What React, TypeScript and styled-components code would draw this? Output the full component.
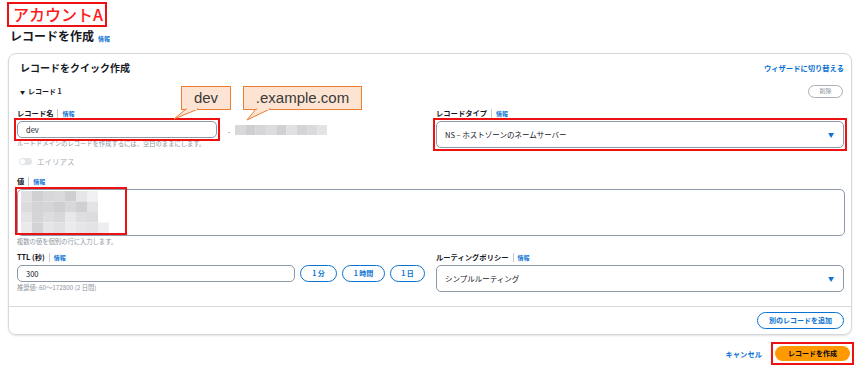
import React from "react";
import styled, { createGlobalStyle, css } from "styled-components";

const GlobalStyle = createGlobalStyle`
  body {
    margin: 0;
    background: #ffffff;
    font-family: "Noto Sans CJK JP", "Noto Sans", sans-serif;
    color: #16191f;
  }
`;

const blue = "#0972d3";
const highlight = "#ee1111";

// square red annotation frame drawn over a control
const markFrame = (inset: number, width: number) => css`
  position: relative;
  &::before {
    content: "";
    position: absolute;
    inset: -${inset}px;
    border: ${width}px solid ${highlight};
    pointer-events: none;
  }
`;

const Page = styled.div`
  position: relative;
  width: 860px;
  height: 370px;
  box-sizing: border-box;
  padding: 2px 8px 0 7px;
  overflow: hidden;
`;

const AccountBadge = styled.div`
  width: 100px;
  height: 25px;
  box-sizing: border-box;
  border: 2px solid ${highlight};
  color: #ff1a1a;
  font-size: 16px;
  font-weight: 500;
  line-height: 21px;
  padding-left: 4px;
  white-space: nowrap;
  overflow: hidden;
`;

const PageTitle = styled.div`
  display: flex;
  align-items: baseline;
  gap: 4px;
  margin: 1px 0 9px 3px;
  height: 16px;
`;

const TitleText = styled.h1`
  margin: 0;
  font-size: 12px;
  line-height: 16px;
  font-weight: 700;
`;

const InfoLink = styled.span`
  color: ${blue};
  font-size: 6px;
  font-weight: 700;
`;

const Card = styled.section`
  margin-left: 1px;
  border: 1px solid #d5d9de;
  border-radius: 8px;
  box-shadow: 0 1px 2px rgba(0, 7, 22, 0.12);
`;

const CardBody = styled.div`
  padding: 7px 7px 14px 8px;
`;

const CardHeader = styled.div`
  display: flex;
  align-items: center;
  justify-content: space-between;
  height: 14px;
`;

const CardTitle = styled.h2`
  margin: 0 0 0 3px;
  font-size: 10px;
  font-weight: 700;
  line-height: 14px;
`;

const TextLink = styled.span`
  color: ${blue};
  font-size: 7.3px;
  font-weight: 700;
`;

const RecordRow = styled.div`
  display: flex;
  align-items: center;
  justify-content: space-between;
  margin-top: 8px;
  height: 16px;
`;

const RecordToggle = styled.div`
  margin-left: 3px;
  font-size: 7px;
  font-weight: 700;
  display: flex;
  align-items: center;
  gap: 3px;
`;

const Caret = styled.span`
  font-size: 5px;
`;

const PillButton = styled.button<{ $tone?: "blue" | "grey" | "orange"; $w?: number }>`
  box-sizing: border-box;
  width: ${({ $w }) => ($w ? `${$w}px` : "auto")};
  height: ${({ $tone }) => ($tone === "orange" ? 15 : 17)}px;
  padding: 0;
  border-radius: 10px;
  border: ${({ $tone }) =>
    $tone === "orange"
      ? "none"
      : $tone === "grey"
      ? "1px solid #a8afb8"
      : `1.5px solid ${blue}`};
  background: ${({ $tone }) => ($tone === "orange" ? "#ff9900" : "#ffffff")};
  color: ${({ $tone }) =>
    $tone === "orange" ? "#000716" : $tone === "grey" ? "#8d949c" : blue};
  font-family: inherit;
  font-size: 7px;
  font-weight: 700;
  line-height: 1;
`;

const DeleteButton = styled(PillButton)`
  height: 13px;
  font-size: 6px;
  font-weight: 400;
  margin-right: 1px;
`;

const TwoCols = styled.div<{ $top: number }>`
  display: grid;
  grid-template-columns: 1fr 1fr;
  column-gap: 11px;
  margin-top: ${({ $top }) => $top}px;
`;

const Field = styled.div`
  display: flex;
  flex-direction: column;
`;

const LabelRow = styled.div`
  display: flex;
  align-items: center;
  height: 12px;
  margin-bottom: 2px;
  font-size: 7.3px;
  font-weight: 700;
`;

const Separator = styled.span`
  width: 1px;
  height: 9px;
  background: #c6cad0;
  margin: 0 4px;
`;

const InputRow = styled.div`
  display: flex;
  align-items: center;
  gap: 5px;
`;

const Input = styled.div<{ $w?: number; $marked?: boolean }>`
  box-sizing: border-box;
  height: 17px;
  ${({ $w }) => ($w ? `width: ${$w}px;` : "flex: 1;")}
  border: 1px solid #8d99a8;
  border-radius: 5px;
  padding: 0 8px;
  display: flex;
  align-items: center;
  justify-content: space-between;
  font-size: 7.5px;
  background: #fff;
  ${({ $marked }) => $marked && markFrame(4, 2)}
`;

const SelectArrow = styled.span`
  color: ${blue};
  font-size: 6px;
  margin-right: 1px;
`;

const Hint = styled.div`
  font-size: 6.3px;
  line-height: 8px;
  color: #8d949c;
  margin-top: 2px;
`;

const AliasRow = styled.div`
  display: flex;
  align-items: center;
  gap: 5px;
  margin: 8px 0 0 2px;
  height: 10px;
  font-size: 7.5px;
  color: #a8afb8;
`;

const Toggle = styled.span`
  position: relative;
  width: 13px;
  height: 7px;
  border-radius: 4px;
  background: #e2e5e9;
  &::after {
    content: "";
    position: absolute;
    left: 1px;
    top: 1px;
    width: 5px;
    height: 5px;
    border-radius: 50%;
    background: #ffffff;
  }
`;

const ValueField = styled(Field)`
  margin-top: 9px;
`;

const TextArea = styled.div`
  position: relative;
  box-sizing: border-box;
  height: 47px;
  border: 1px solid #8d99a8;
  border-radius: 5px;
  margin-right: -1px;
`;

const AreaMark = styled.div`
  position: absolute;
  left: -3px;
  top: -3px;
  width: 112px;
  height: 48px;
  box-sizing: border-box;
  border: 2px solid ${highlight};
`;

const Mosaic = styled.svg`
  position: absolute;
  left: 3px;
  top: 1px;
`;

const Dot = styled.span`
  font-size: 7px;
  color: #555;
  margin-left: 6px;
`;

const Divider = styled.div`
  border-top: 1px solid #d5d9de;
  padding: 5px 7px 5px 0;
  display: flex;
  justify-content: flex-end;
`;

const Footer = styled.div`
  display: flex;
  justify-content: flex-end;
  align-items: center;
  gap: 13px;
  margin-top: 11px;
  padding-right: 2px;
`;

const CreateButton = styled(PillButton)`
  ${markFrame(4, 2)}
`;

const Callout = styled.div<{ $x: number; $w: number }>`
  position: absolute;
  left: ${({ $x }) => $x}px;
  top: 86px;
  width: ${({ $w }) => $w}px;
  height: 24px;
  box-sizing: border-box;
  background: #fde4d2;
  border: 1px solid #ee7c33;
  color: #3a3a3a;
  font-family: "Liberation Sans", Arial, sans-serif;
  font-size: 15px;
  line-height: 21px;
  text-align: center;
`;

const CalloutTail = styled.svg`
  position: absolute;
  left: 0;
  top: 0;
  overflow: visible;
  pointer-events: none;
`;

const valueCells: string[][] = [
  ["#e0e0e2", "#d0d0d3", "#d7d7da", "#dadadd", "#cfcfd2", "#e6e6e8", "#f0f0f2", "#ffffff"],
  ["#dcdcdf", "#d3d3d6", "#d5d5d8", "#cfcfd2", "#d8d8db", "#d0d0d3", "#e3e3e5", "#ffffff"],
  ["#e4e4e6", "#d5d5d8", "#dddde0", "#d8d8db", "#e8e8ea", "#dedee0", "#dcdcdf", "#ffffff"],
  ["#eaeaec", "#d3d3d6", "#e5e5e7", "#e1e1e3", "#ebebed", "#e6e6e8", "#e3e3e5", "#eeeef0"],
];

const domainCells = ["#d9d9dc", "#cfcfd2", "#d6d6d9", "#dcdcdf", "#d1d1d4", "#e0e0e3", "#d4d4d7", "#dadadd", "#e3e3e5"];

const Info: React.FC = () => (
  <>
    <Separator />
    <InfoLink>情報</InfoLink>
  </>
);

const App: React.FC = () => {
  return (
    <Page>
      <GlobalStyle />
      <AccountBadge>アカウントA</AccountBadge>
      <PageTitle>
        <TitleText>レコードを作成</TitleText>
        <InfoLink>情報</InfoLink>
      </PageTitle>

      <Card>
        <CardBody>
          <CardHeader>
            <CardTitle>レコードをクイック作成</CardTitle>
            <TextLink>ウィザードに切り替える</TextLink>
          </CardHeader>

          <RecordRow>
            <RecordToggle>
              <Caret>▼</Caret>
              レコード 1
            </RecordToggle>
            <DeleteButton $tone="grey" $w={35}>
              削除
            </DeleteButton>
          </RecordRow>

          <TwoCols $top={8}>
            <Field>
              <LabelRow>
                レコード名
                <Info />
              </LabelRow>
              <InputRow>
                <Input $w={200} $marked>
                  dev
                </Input>
                <Dot>.</Dot>
                <svg width="92" height="10">
                  {domainCells.map((c, i) => (
                    <rect key={i} x={i * 10.3} y={0} width={10.3} height={10} fill={c} />
                  ))}
                </svg>
              </InputRow>
              <Hint>ルートドメインのレコードを作成するには、空白のままにします。</Hint>
            </Field>
            <Field>
              <LabelRow>
                レコードタイプ
                <Info />
              </LabelRow>
              <Input $marked>
                NS – ホストゾーンのネームサーバー
                <SelectArrow>▼</SelectArrow>
              </Input>
            </Field>
          </TwoCols>

          <AliasRow>
            <Toggle />
            エイリアス
          </AliasRow>

          <ValueField>
            <LabelRow>
              値
              <Info />
            </LabelRow>
            <TextArea>
              <Mosaic width="100" height="42">
                {valueCells.map((row, r) =>
                  row.map((c, i) => (
                    <rect key={`${r}-${i}`} x={i * 11} y={r * 10.5} width={11} height={10.5} fill={c} />
                  ))
                )}
              </Mosaic>
              <AreaMark />
            </TextArea>
            <Hint>複数の値を個別の行に入力します。</Hint>
          </ValueField>

          <TwoCols $top={5}>
            <Field>
              <LabelRow>
                TTL (秒)
                <Info />
              </LabelRow>
              <InputRow>
                <Input>300</Input>
                <PillButton $w={37}>1 分</PillButton>
                <PillButton $w={43}>1 時間</PillButton>
                <PillButton $w={35}>1 日</PillButton>
              </InputRow>
              <Hint>推奨値: 60～172800 (2 日間)</Hint>
            </Field>
            <Field>
              <LabelRow>
                ルーティングポリシー
                <Info />
              </LabelRow>
              <Input>
                シンプルルーティング
                <SelectArrow>▼</SelectArrow>
              </Input>
            </Field>
          </TwoCols>
        </CardBody>

        <Divider>
          <PillButton $w={87}>別のレコードを追加</PillButton>
        </Divider>
      </Card>

      <Footer>
        <TextLink>キャンセル</TextLink>
        <CreateButton $tone="orange" $w={75}>
          レコードを作成
        </CreateButton>
      </Footer>

      <Callout $x={181} $w={50}>
        dev
      </Callout>
      <Callout $x={243} $w={119}>
        .example.com
      </Callout>
      <CalloutTail width="1" height="1">
        <polygon points="186,109 198,109 174,119" fill="#fde4d2" stroke="#ee7c33" strokeWidth="1" />
        <line x1="187" y1="109" x2="197" y2="109" stroke="#fde4d2" strokeWidth="2" />
        <polygon points="256,109 270,109 247,120" fill="#fde4d2" stroke="#ee7c33" strokeWidth="1" />
        <line x1="257" y1="109" x2="269" y2="109" stroke="#fde4d2" strokeWidth="2" />
      </CalloutTail>
    </Page>
  );
};

export default App;
